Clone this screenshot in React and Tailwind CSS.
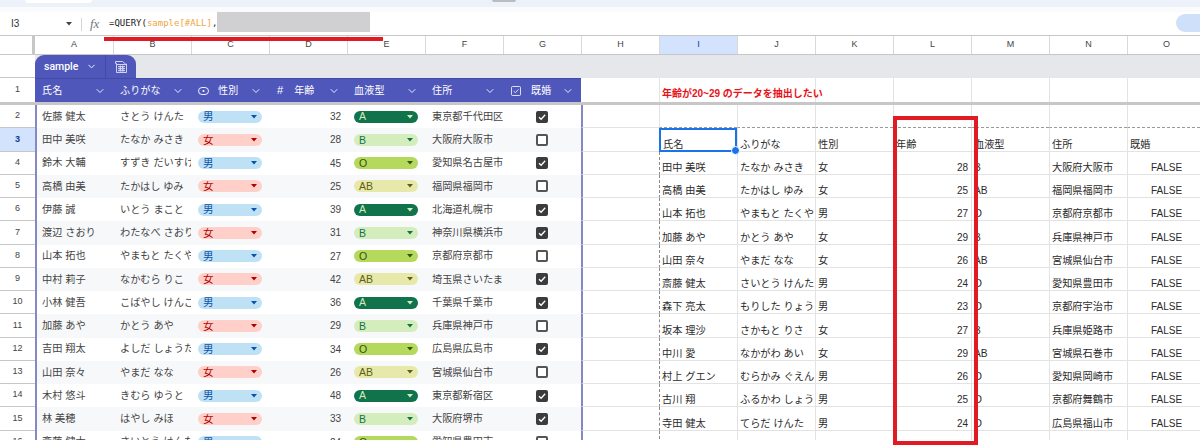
import React from 'react';
import { ChevronDown } from 'lucide-react';

const LETTERS = ['A','B','C','D','E','F','G','H','I','J','K','L','M','N','O'];

const LEFT = [
  ['佐藤 健太','さとう けんた','男',32,'A','東京都千代田区',true],
  ['田中 美咲','たなか みさき','女',28,'B','大阪府大阪市',false],
  ['鈴木 大輔','すずき だいすけ','男',45,'O','愛知県名古屋市',true],
  ['高橋 由美','たかはし ゆみ','女',25,'AB','福岡県福岡市',false],
  ['伊藤 誠','いとう まこと','男',39,'A','北海道札幌市',true],
  ['渡辺 さおり','わたなべ さおり','女',31,'B','神奈川県横浜市',true],
  ['山本 拓也','やまもと たくや','男',27,'O','京都府京都市',false],
  ['中村 莉子','なかむら りこ','女',42,'AB','埼玉県さいたま市',true],
  ['小林 健吾','こばやし けんご','男',36,'A','千葉県千葉市',true],
  ['加藤 あや','かとう あや','女',29,'B','兵庫県神戸市',false],
  ['吉田 翔太','よしだ しょうた','男',34,'O','広島県広島市',true],
  ['山田 奈々','やまだ なな','女',26,'AB','宮城県仙台市',false],
  ['木村 悠斗','きむら ゆうと','男',48,'A','東京都新宿区',true],
  ['林 美穂','はやし みほ','女',33,'B','大阪府堺市',true],
  ['斎藤 健太','さいとう けんた','男',24,'O','愛知県豊田市',false],
];

const RIGHT = [
  ['氏名','ふりがな','性別','年齢','血液型','住所','既婚'],
  ['田中 美咲','たなか みさき','女',28,'B','大阪府大阪市','FALSE'],
  ['高橋 由美','たかはし ゆみ','女',25,'AB','福岡県福岡市','FALSE'],
  ['山本 拓也','やまもと たくや','男',27,'O','京都府京都市','FALSE'],
  ['加藤 あや','かとう あや','女',29,'B','兵庫県神戸市','FALSE'],
  ['山田 奈々','やまだ なな','女',26,'AB','宮城県仙台市','FALSE'],
  ['斎藤 健太','さいとう けんた','男',24,'O','愛知県豊田市','FALSE'],
  ['森下 亮太','もりした りょうた','男',23,'O','京都府宇治市','FALSE'],
  ['坂本 理沙','さかもと りさ','女',27,'B','兵庫県姫路市','FALSE'],
  ['中川 愛','なかがわ あい','女',29,'AB','宮城県石巻市','FALSE'],
  ['村上 グエン','むらかみ ぐえん','男',26,'O','愛知県岡崎市','FALSE'],
  ['古川 翔','ふるかわ しょう','男',25,'O','京都府舞鶴市','FALSE'],
  ['寺田 健太','てらだ けんた','男',24,'O','広島県福山市','FALSE'],
];

const CHIP = {
  '男': ['bg-[#bfe1f6] text-[#0a53a8]', '#0a53a8'],
  '女': ['bg-[#ffcfc9] text-[#b10202]', '#b10202'],
  'A': ['bg-[#11734b] text-[#d4edbc]', '#d4edbc'],
  'B': ['bg-[#d4edbc] text-[#11734b]', '#11734b'],
  'O': ['bg-[#b5d95c] text-[#33520a]', '#33520a'],
  'AB': ['bg-[#e6e9a9] text-[#5f5f14]', '#5f5f14'],
};

function Chip({ v }) {
  const [cls, tri] = CHIP[v];
  return (
    <div className={`w-[64px] h-[12px] rounded-full flex items-center justify-between pl-[5px] pr-[5px] text-[10.5px] leading-none ${cls}`}>
      <span>{v}</span>
      <svg width="6" height="4" viewBox="0 0 6 4"><path d="M0 0h6L3 3.6z" fill={tri} /></svg>
    </div>
  );
}

function Check({ on }) {
  if (!on) return <div className="w-[12px] h-[12px] rounded-[2px] border-2 border-[#555555] bg-white" />;
  return (
    <div className="w-[12px] h-[12px] rounded-[2px] bg-[#3c3c3c] flex items-center justify-center">
      <svg width="10" height="10" viewBox="0 0 10 10" fill="none"><path d="M2 5.2 4.1 7.3 8.2 2.8" stroke="#fff" strokeWidth="1.3" /></svg>
    </div>
  );
}

function HeadCell({ icon, label }) {
  return (
    <div className="w-[78px] shrink-0 h-full flex items-center pl-[7px] pr-[7px] text-white text-[10px]">
      {icon}
      <span className="tracking-[0.2px]">{label}</span>
      <ChevronDown size={12} strokeWidth={2} className="ml-auto text-[#e8e9f8]" />
    </div>
  );
}

function PillIcon() {
  return (
    <svg width="11" height="8" viewBox="0 0 11 8" fill="none" className="mr-[9px] shrink-0">
      <rect x="0.5" y="0.5" width="10" height="7" rx="3.5" stroke="#fff" strokeWidth="0.9" />
      <circle cx="5.5" cy="4" r="1" fill="#fff" />
    </svg>
  );
}

function CheckIcon() {
  return (
    <svg width="10" height="10" viewBox="0 0 10 10" fill="none" className="ml-[1px] mr-[10px] shrink-0">
      <rect x="0.5" y="0.5" width="9" height="9" rx="1" stroke="#fff" strokeWidth="0.8" />
      <path d="M2.6 5 4.4 6.7 7.4 3.4" stroke="#fff" strokeWidth="0.8" />
    </svg>
  );
}

function TableIcon() {
  return (
    <svg width="14" height="14" viewBox="0 0 14 14" fill="none">
      <path d="M1.5 1.5h7l3 2.5H12.5v8.5h-10V3.5h-1z" stroke="#dfe1f5" strokeWidth="0.9" />
      <path d="M3 4.5h9" stroke="#dfe1f5" strokeWidth="0.9" />
      <path d="M4 6.7h7M4 8.7h7M4 10.7h7M6.3 5.5v6M8.8 5.5v6" stroke="#dfe1f5" strokeWidth="1" />
    </svg>
  );
}

function RowNum({ n, selected }) {
  return (
    <div className={`w-[35px] shrink-0 h-full flex items-center justify-center text-[9px] border-b border-[#c7c7c7] ${selected ? 'bg-[#d3e3fd] text-[#0b3d91] font-bold' : 'bg-white text-[#444444]'}`}>
      {n}
    </div>
  );
}

function LeftCells({ row, striped }) {
  const [name, kana, sex, age, blood, addr, married] = row;
  const tone = `w-[78px] shrink-0 h-full flex items-center overflow-hidden whitespace-nowrap`;
  return (
    <div className={`flex h-full shrink-0 text-[10.2px] text-[#444444] ${striped ? 'bg-[#f7f8fa]' : 'bg-white'}`}>
      <div className={`${tone} border-l-2 border-[#8489c4] pl-[5px]`}>{name}</div>
      <div className={`${tone} pl-[7px]`}>{kana}</div>
      <div className={`${tone} pl-[7px]`}><Chip v={sex} /></div>
      <div className={`${tone} justify-end pr-[6px] text-[10px]`}>{age}</div>
      <div className={`${tone} pl-[7px]`}><Chip v={blood} /></div>
      <div className={`${tone} pl-[7px]`}>{addr}</div>
      <div className={`${tone} justify-center`}><Check on={married} /></div>
    </div>
  );
}

function RightCells({ row, rowIndex }) {
  const isHeader = rowIndex === 1;
  const aboveRange = rowIndex === 0;
  const base = 'w-[78px] shrink-0 h-full flex items-end whitespace-nowrap text-[10.2px] leading-[10px] text-[#2b2b2b]';
  const line = aboveRange ? 'border-b border-b-[#9a9a9a] [border-bottom-style:dashed]' : 'border-b border-b-[#e3e3e3]';
  return (
    <div className="flex h-full">
      <div className="w-[78px] shrink-0 h-full border-l-2 border-l-[#8489c4] border-b border-b-[#e3e3e3]" />
      {Array.from({ length: 7 }).map((_, i) => {
        const v = row ? row[i] : '';
        const numeric = row && !isHeader && i === 3;
        const center = row && !isHeader && i === 6;
        const left = i === 0 && !aboveRange
          ? 'border-l border-l-[#8a8a8a] [border-left-style:dashed]'
          : 'border-l border-l-[#e3e3e3]';
        if (isHeader && i === 0) {
          return (
            <div key={i} className={`${base} relative border-2 border-[#1a73e8] pl-[2px] z-10`}>
              {v}
              <span className="absolute right-[-5px] bottom-[-5px] w-[7px] h-[7px] rounded-full bg-[#1a73e8] border border-white box-content" />
            </div>
          );
        }
        return (
          <div key={i} className={`${base} pb-[1px] overflow-hidden ${left} ${line} ${numeric ? 'justify-end pr-[3px] text-[10px]' : center ? 'justify-center text-[10px]' : 'pl-[2px]'}`}>
            {v}
          </div>
        );
      })}
    </div>
  );
}

export default function App() {
  return (
    <div className="relative w-[1200px] h-[445px] overflow-hidden bg-white [font-family:'Liberation_Sans','Noto_Sans_CJK_JP',sans-serif]">
      {/* browser / sheet chrome */}
      <div className="h-[7px] bg-[#edf2fa] flex items-start">
        <div className="ml-[25px] w-[67px] h-[3px] bg-white rounded-b-[4px]" />
        <div className="ml-[400px] w-[24px] h-[2px] bg-[#b9bcc0] rounded-b-[2px]" />
      </div>
      <div className="h-[5px] bg-[#f9fbfd]" />

      {/* formula bar */}
      <div className="h-[24px] border-b border-[#c7c7c7] flex items-start bg-white relative">
        <div className="w-[66px] pl-[11px] h-[23px] flex items-center text-[10px] text-[#333333]">I3</div>
        <svg width="6" height="4" viewBox="0 0 6 4" className="mt-[10px]"><path d="M0 0h6L3 3.6z" fill="#444" /></svg>
        <div className="ml-[9px] mt-[6px] w-px h-[13px] bg-[#d5d5d5]" />
        <div className="ml-[8px] w-[19px] h-[23px] flex items-center text-[13px] italic text-[#777777] [font-family:'Liberation_Serif',serif]">fx</div>
        <div className="h-[23px] flex items-center text-[9px] text-[#222222] whitespace-nowrap [font-family:'DejaVu_Sans_Mono',monospace]">
          =QUERY(<span className="text-[#f0a63c]">sample[#ALL]</span>,
        </div>
        <div className="w-[153px] h-[20px] bg-[#d0d0d2]" />
        <div className="ml-auto mt-[2px] w-[24px] h-[18px] rounded-l-full bg-[#cfe0fb]" />
      </div>

      {/* column letters */}
      <div className="flex h-[19px] border-b border-[#c7c7c7] text-[9px] text-[#444444]">
        <div className="w-[35px] shrink-0 bg-white border-r-[3px] border-[#c7c7c7]" />
        {LETTERS.map((l, i) => (
          <div key={l} className={`w-[78px] shrink-0 flex items-center justify-center ${i ? 'border-l border-[#d9d9d9]' : ''} ${l === 'I' ? 'bg-[#d3e3fd] text-[#0b3d91]' : ''}`}>
            {l}
          </div>
        ))}
      </div>

      {/* table tab row */}
      <div className="flex h-[23px]">
        <div className="w-[35px] shrink-0 border-b border-[#c7c7c7] bg-white" />
        <div className="flex-1 bg-[#e5e7ea] flex">
          <div className="w-[101px] h-full rounded-t-[9px] bg-[#4f57ba] flex items-center text-white text-[10.5px] font-medium [font-family:Roboto,sans-serif]">
            <span className="pl-[9px] w-[50px]">sample</span>
            <ChevronDown size={11} strokeWidth={2} className="ml-[1px]" />
            <div className="ml-[8px] w-px h-full bg-[#414aa5]" />
            <div className="flex-1 flex justify-center"><TableIcon /></div>
          </div>
        </div>
      </div>

      {/* row 1 */}
      <div className="flex h-[24px] border-b-[3px] border-[#c7c7c7] box-content">
        <div className="w-[35px] shrink-0 h-full flex items-center justify-center text-[9px] text-[#444444] bg-white">1</div>
        <div className="flex h-full bg-[#4f57ba] border-t border-[#414aa5]">
          <HeadCell label="氏名" />
          <HeadCell label="ふりがな" />
          <HeadCell icon={<PillIcon />} label="性別" />
          <HeadCell icon={<span className="mr-[11px] ml-[1px] text-[11px]">#</span>} label="年齢" />
          <HeadCell label="血液型" />
          <HeadCell label="住所" />
          <HeadCell icon={<CheckIcon />} label="既婚" />
        </div>
        <div className="flex h-full">
          <div className="w-[78px] shrink-0" />
          <div className="w-[78px] shrink-0 border-l border-[#e3e3e3] flex items-end pb-[1px] pl-[2px] whitespace-nowrap text-[10px] font-bold text-[#e8131a] z-10">
            年齢が20~29 のデータを抽出したい
          </div>
          {Array.from({ length: 6 }).map((_, i) => (
            <div key={i} className={`w-[78px] shrink-0 ${i < 1 ? '' : 'border-l border-[#e3e3e3]'}`} />
          ))}
        </div>
      </div>

      {/* data rows */}
      <div className="h-[335px] overflow-hidden">
        {LEFT.map((row, i) => (
          <div key={i} className="flex h-[23.25px]">
            <RowNum n={i + 2} selected={i === 1} />
            <LeftCells row={row} striped={i % 2 === 1} />
            <RightCells row={i === 0 ? null : RIGHT[i - 1] || null} rowIndex={i} />
          </div>
        ))}
      </div>

      {/* annotations */}
      <div className="absolute left-[104px] top-[37px] w-[279px] h-[4px] bg-[#e01b24]" />
      <div className="absolute left-[893px] top-[116px] w-[85px] h-[329px] border-[4px] border-[#e01b24]" />
    </div>
  );
}
